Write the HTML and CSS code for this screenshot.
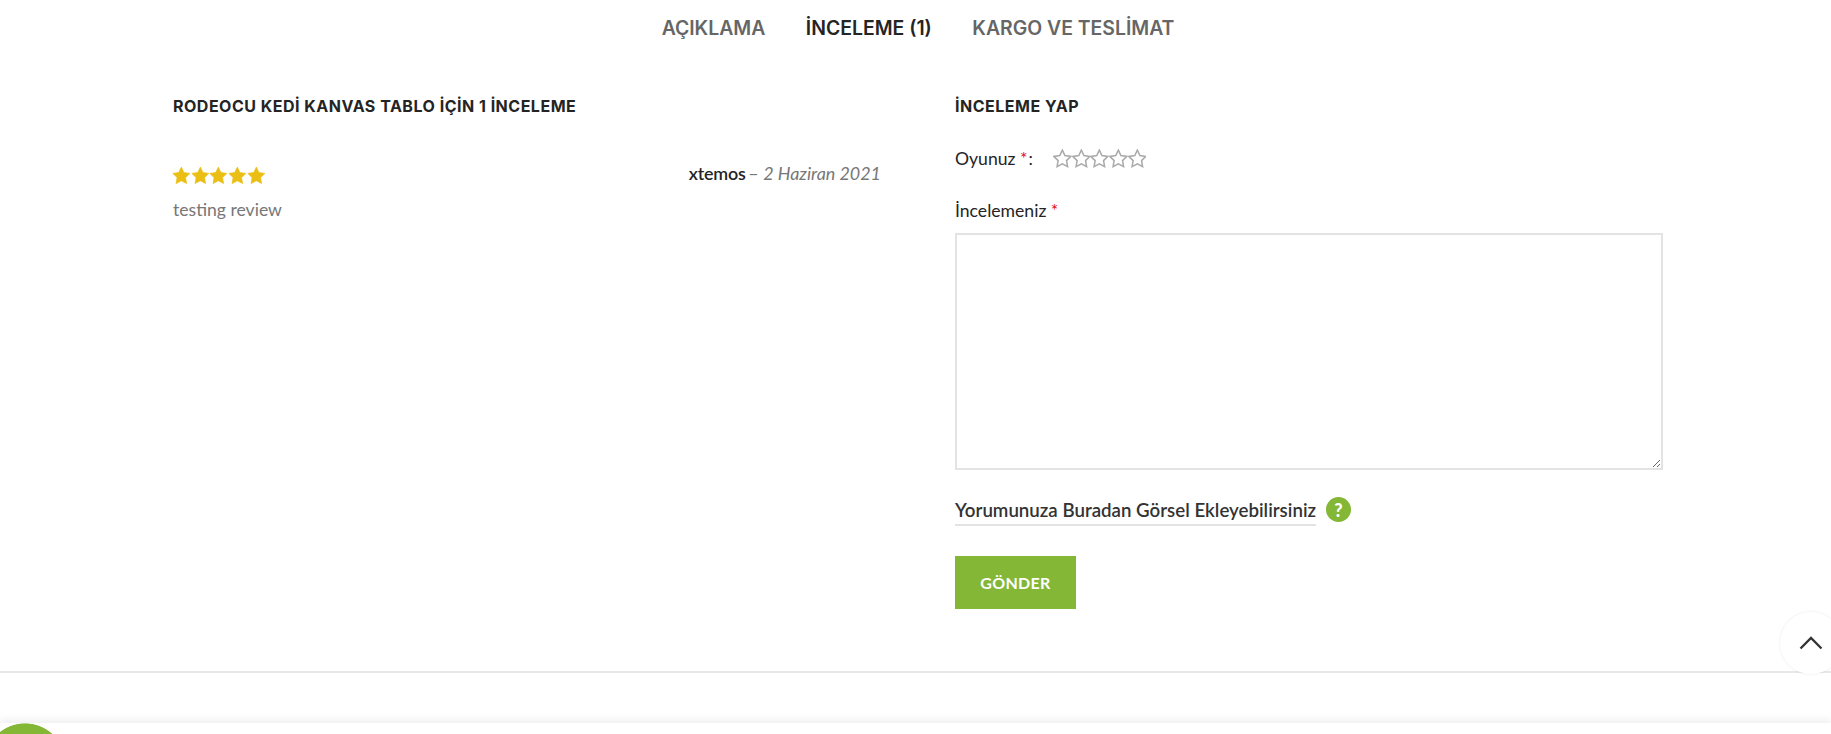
FILE: index.html
```html
<!DOCTYPE html>
<html lang="tr">
<head>
<meta charset="utf-8">
<title>İnceleme</title>
<link rel="stylesheet" href="styles.css">
</head>
<body>
<svg class="defs" width="0" height="0" aria-hidden="true">
  <defs>
    <path id="star" d="M8 .8l2.200 4.700 5.100.7-3.700 3.600.9 5.100L8 12.500l-4.500 2.400.9-5.100L.7 6.200l5.100-.7z"/>
  </defs>
</svg>
<nav class="tabs">
  <a class="tab">AÇIKLAMA</a>
  <a class="tab active">İNCELEME (1)</a>
  <a class="tab">KARGO VE TESLİMAT</a>
</nav>
<main class="reviews">
  <section class="col">
    <h2 class="heading">RODEOCU KEDİ KANVAS TABLO İÇİN 1 İNCELEME</h2>
    <div class="review-head">
      <div class="stars-full">
        <svg viewBox="0 0 16 16"><use href="#star"/></svg>
        <svg viewBox="0 0 16 16"><use href="#star"/></svg>
        <svg viewBox="0 0 16 16"><use href="#star"/></svg>
        <svg viewBox="0 0 16 16"><use href="#star"/></svg>
        <svg viewBox="0 0 16 16"><use href="#star"/></svg>
      </div>
      <div class="meta"><strong class="author">xtemos</strong> <span class="date">– <em>2 Haziran 2021</em></span></div>
    </div>
    <p class="review-text">testing review</p>
  </section>
  <section class="col">
    <h2 class="heading">İNCELEME YAP</h2>
    <div class="rating">
      <span>Oyunuz <span class="req req-tight">*</span> :</span>
      <div class="stars-empty">
        <svg viewBox="0 0 16 16"><use href="#star"/></svg>
        <svg viewBox="0 0 16 16"><use href="#star"/></svg>
        <svg viewBox="0 0 16 16"><use href="#star"/></svg>
        <svg viewBox="0 0 16 16"><use href="#star"/></svg>
        <svg viewBox="0 0 16 16"><use href="#star"/></svg>
      </div>
    </div>
    <label class="label">İncelemeniz <span class="req">*</span></label>
    <textarea class="input"></textarea>
    <div class="upload">
      <span class="upload-label">Yorumunuza Buradan Görsel Ekleyebilirsiniz</span>
      <span class="help">?</span>
    </div>
    <button class="submit">GÖNDER</button>
  </section>
</main>
<hr class="divider">
<div class="to-top">
  <svg viewBox="0 0 24 24"><path d="M1.500 17.500 12 7l10.500 10.500"/></svg>
</div>
<footer class="bottom-bar"><span class="chat"></span></footer>
</body>
</html>
```
FILE: styles.css
```css
* { box-sizing: border-box; }
html, body { height: 734px; overflow: hidden; }
body {
  margin: 0;
  position: relative;
  background: #fff;
  color: #242424;
  font-family: "Lato", "Liberation Sans", sans-serif;
  font-size: 17.600px;
}
.defs { position: absolute; }
.tabs {
  display: flex;
  justify-content: center;
  gap: 40.500px;
  height: 56px;
  padding: 14px 0 0 5px;
}
.tab {
  font-family: "Inter", "Liberation Sans", sans-serif;
  font-weight: 600;
  font-size: 19.400px;
  line-height: 28px;
  color: #666;
}
.tab.active { color: #242424; }
.reviews {
  display: grid;
  grid-template-columns: 708px 708px;
  gap: 74px;
  padding: 40px 0 0 173px;
  height: 615px;
}
.heading {
  margin: 0;
  font-family: "Inter", "Liberation Sans", sans-serif;
  font-weight: 700;
  font-size: 16px;
  letter-spacing: .5px;
  line-height: 20px;
  color: #242424;
}
.review-head {
  display: flex;
  justify-content: space-between;
  align-items: flex-start;
  margin-top: 49px;
  height: 24px;
}
.stars-full { display: flex; margin: 1px 0 0 -1px; }
.stars-full svg {
  width: 18.700px;
  height: 19px;
  fill: #eabe12;
  stroke: #eabe12;
  stroke-width: .6;
}
.meta { font-size: 17.900px; line-height: 24px; margin-top: -4px; color: #242424; }
.author { font-weight: 600; margin-right: -2px; letter-spacing: -.2px; }
.date { color: #777; }
.review-text { margin: 9px 0 0; line-height: 24px; color: #777; }
.rating {
  display: flex;
  align-items: center;
  gap: 20px;
  margin-top: 30px;
  height: 24px;
}
.req { color: #e01020; }
.req-tight { margin-right: -3.500px; }
.stars-empty { display: flex; }
.stars-empty svg {
  width: 18.700px;
  height: 19px;
  fill: #fff;
  stroke: #aaa;
  stroke-width: 1.300;
}
.label { display: block; margin-top: 29px; line-height: 24px; }
.input {
  display: block;
  width: 708px;
  height: 237px;
  margin-top: 10px;
  background: #fff;
  border: 2px solid #e3e3e3;
  border-radius: 0;
  outline: none;
}
.upload {
  display: flex;
  align-items: center;
  gap: 10px;
  margin-top: 26px;
  height: 30px;
}
.upload-label {
  font-weight: 600;
  font-size: 18.700px;
  line-height: 28px;
  color: #333;
  border-bottom: 2px solid #e3e3e3;
  height: 30px;
}
.help {
  display: flex;
  align-items: center;
  justify-content: center;
  width: 25px;
  height: 25px;
  margin-top: -3px;
  border-radius: 50%;
  background: #83b735;
  color: #fff;
  font-weight: 900;
  font-size: 18px;
}
.submit {
  display: block;
  width: 121px;
  height: 53px;
  margin-top: 30px;
  padding: 0;
  border: 0;
  background: #83b735;
  color: #fff;
  font-family: inherit;
  font-weight: 700;
  font-size: 16px;
  letter-spacing: .3px;
}
.divider {
  margin: 0;
  height: 2px;
  border: 0;
  background: #e8e8e8;
}
.to-top {
  position: absolute;
  left: 1780px;
  top: 612px;
  width: 62px;
  height: 62px;
  border-radius: 50%;
  background: #fff;
  box-shadow: 0 0 3px rgba(0,0,0,.09);
  display: flex;
  align-items: center;
  justify-content: center;
}
.to-top svg {
  width: 24px;
  height: 24px;
  fill: none;
  stroke: #333;
  stroke-width: 2.300;
}
.bottom-bar {
  position: absolute;
  left: 0;
  right: 0;
  top: 723px;
  height: 11px;
  background: #fff;
  box-shadow: 0 -3px 9px rgba(0,0,0,.07);
}
.chat {
  position: absolute;
  left: -16px;
  top: 0;
  width: 82px;
  height: 11px;
  background: radial-gradient(circle 41px at 41px 41px, #83b735 98%, transparent 100%);
}
```
